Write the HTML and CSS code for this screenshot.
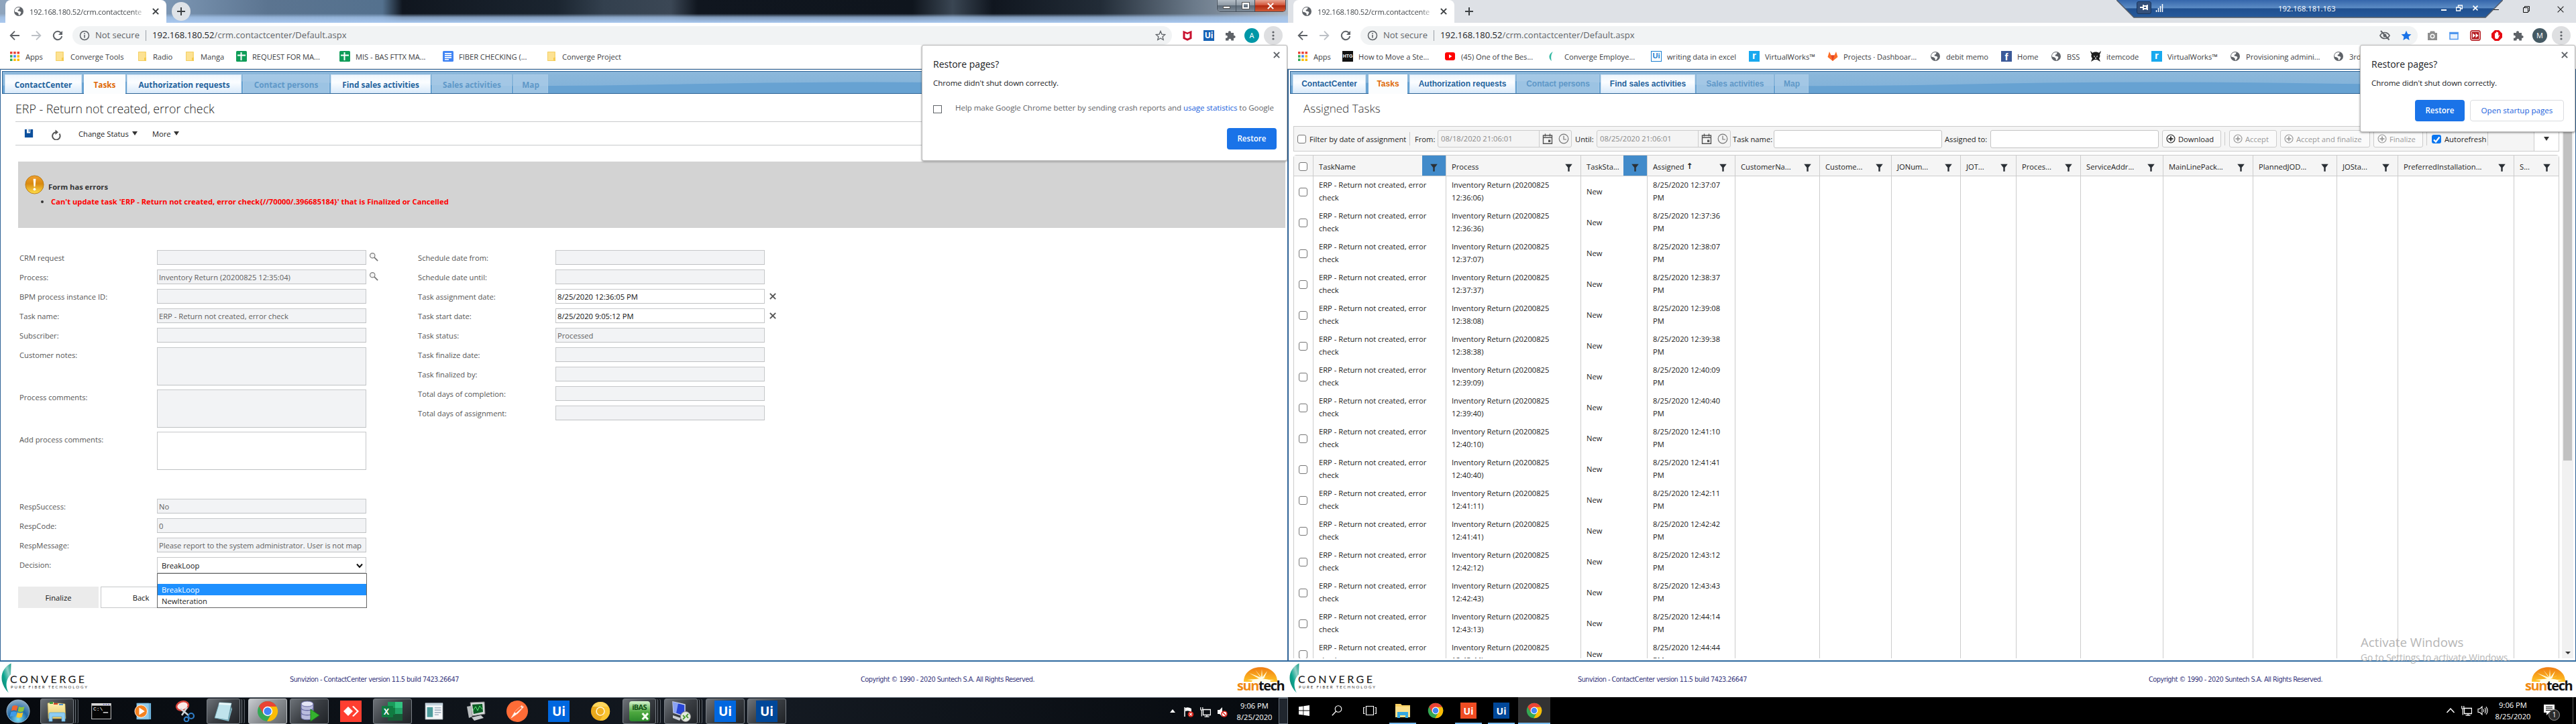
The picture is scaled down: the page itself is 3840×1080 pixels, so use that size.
FILE: index.html
```html
<!DOCTYPE html>
<html lang="en">
<head>
<meta charset="utf-8">
<title>ContactCenter</title>
<link rel="stylesheet" href="styles.css">
</head>
<body>
<svg class="sprite" width="0" height="0" aria-hidden="true">
  <defs>
    <linearGradient id="g-gold" x1="0" y1="0" x2="0" y2="1"><stop offset="0" stop-color="#f0a030"/><stop offset=".45" stop-color="#d98a10"/><stop offset="1" stop-color="#ffe04a"/></linearGradient>
    <linearGradient id="g-swoosh" x1="1" y1="0" x2="0" y2="1"><stop offset="0" stop-color="#0f9a84"/><stop offset=".3" stop-color="#8fd0c6"/><stop offset=".6" stop-color="#0aa58e"/><stop offset="1" stop-color="#1d7a6e"/></linearGradient>
    <linearGradient id="g-sun" x1="0" y1="0" x2="0" y2="1"><stop offset="0" stop-color="#f07c12"/><stop offset="1" stop-color="#ffc425"/></linearGradient>
    <radialGradient id="g-orb" cx=".5" cy=".85" r=".9"><stop offset="0" stop-color="#7fe0f4"/><stop offset=".45" stop-color="#1f6aa8"/><stop offset="1" stop-color="#9fb6c8"/></radialGradient>
    <linearGradient id="g-folder" x1="0" y1="0" x2="0" y2="1"><stop offset="0" stop-color="#fdf3b8"/><stop offset="1" stop-color="#e6c763"/></linearGradient>
  </defs>
  <symbol id="globe" viewBox="0 0 16 16"><circle cx="8" cy="8" r="7" fill="#5f6368"/><path d="M6 2.200 9.500 2 9 4.500 6.500 6 7 7.500 10 8l1.500 1.500-1.500 3-2 1.800-.5-3.300-2-1.500L2 8.500a6 6 0 0 1 4-6.300z" fill="#fff"/></symbol>
  <symbol id="back" viewBox="0 0 16 16"><path d="M15 8H2M8 1.700 1.700 8 8 14.300" fill="none" stroke="currentColor" stroke-width="1.900"/></symbol>
  <symbol id="fwd" viewBox="0 0 16 16"><path d="M1 8h13M8 1.700 14.300 8 8 14.300" fill="none" stroke="currentColor" stroke-width="1.900"/></symbol>
  <symbol id="reload" viewBox="0 0 16 16"><path d="M13 4.300A6.200 6.200 0 1 0 14.200 8.800" fill="none" stroke="currentColor" stroke-width="2"/><path d="M15 1v6H9z" fill="currentColor"/></symbol>
  <symbol id="info" viewBox="0 0 16 16"><circle cx="8" cy="8" r="6.500" fill="none" stroke="#5f6368" stroke-width="1.500"/><path d="M7.200 7h1.600v4.500H7.200zM7.200 4.300h1.600V6H7.200z" fill="#5f6368"/></symbol>
  <symbol id="apps" viewBox="0 0 16 16"><path d="M1 1h3.500v3.500H1zM6.200 1h3.500v3.500H6.200zM11.500 1H15v3.500h-3.500z" fill="#ea4335"/><path d="M1 6.200h3.500v3.500H1z" fill="#34a853"/><path d="M6.200 6.200h3.500v3.500H6.200z" fill="#4285f4"/><path d="M11.500 6.200H15v3.500h-3.500zM6.200 11.500h3.500V15H6.200zM11.500 11.500H15V15h-3.500z" fill="#fbbc05"/><path d="M1 11.500h3.500V15H1z" fill="#34a853"/></symbol>
  <symbol id="folder" viewBox="0 0 16 16"><path d="M2 1h12v14H2z" fill="#fde293"/><path d="M13 10h-2v5h3V9z" fill="#f6c944"/><path d="M2.500 1.500h10.500v13H2.500z" fill="none" stroke="#f3cf62" stroke-width="1"/></symbol>
  <symbol id="sheet" viewBox="0 0 16 16"><rect width="16" height="16" rx="1.500" fill="#0f9d58"/><path d="M6.500 2h2v12h-2zM2 5.500h12v2H2z" fill="#fff"/></symbol>
  <symbol id="doc" viewBox="0 0 16 16"><rect width="16" height="16" rx="1.500" fill="#4285f4"/><path d="M3 3h10v1.700H3zM3 6h10v1.700H3zM3 9h10v1.700H3zM3 12h6v1.500H3z" fill="#fff"/></symbol>
  <symbol id="yt" viewBox="0 0 16 16"><rect x="0" y="2" width="15" height="12" rx="3" fill="#f00"/><path d="M6 5.300 10.500 8 6 10.700z" fill="#fff"/></symbol>
  <symbol id="cmark" viewBox="0 0 16 16"><path d="M7 1C0 5 0 11 5 15 3.500 10 4 5 7 1z" fill="#33b8a2"/></symbol>
  <symbol id="gitlab" viewBox="0 0 16 16"><path d="M8 15 .5 9 3 1l2.500 5.500h5L13 1l2.500 8z" fill="#fc6d26"/><path d="m8 15-2.500-8.500h5z" fill="#e24329"/></symbol>
  <symbol id="skull" viewBox="0 0 16 16"><path d="M0 0c2 1 3 3 3 3 2-2 8-2 10 0 0 0 1-2 3-3-1 3-1 4-2 5 1 3 0 5-1 6l2 5-5-3H6l-5 3 2-5C1 9 1 7 2 5 1 4 1 3 0 0z" fill="#1d1d1d"/><path d="M5 7l2 1-1 1.500zM11 7 9 8l1 1.500zM7 10h2v1.500H7z" fill="#fff"/></symbol>
  <symbol id="star" viewBox="0 0 16 16"><path d="m8 1.500 1.900 4.600 4.900.4-3.700 3.200 1.100 4.800L8 12l-4.200 2.500 1.100-4.800L1.200 6.500l4.900-.4z" fill="none" stroke="#5f6368" stroke-width="1.300"/></symbol>
  <symbol id="starf" viewBox="0 0 16 16"><path d="m8 .8 2.200 5 5.300.5-4 3.500 1.200 5.200L8 12.200 3.300 15l1.200-5.200-4-3.500 5.300-.5z" fill="#1a73e8"/></symbol>
  <symbol id="mcafee" viewBox="0 0 16 16"><path d="M1.500.8 8 3.500 14.500.8v12L8 15.700l-6.500-2.900zM4.500 4.500v6.500L8 12.500l3.500-1.500V4.500L8 6.300z" fill="#c8102e" fill-rule="evenodd"/></symbol>
  <symbol id="puzzle" viewBox="0 0 16 16"><path d="M1 4h4.200a2 2 0 1 1 3.600 0H13v4a2 2 0 1 1 0 3.800V15.500H9.200a2 2 0 1 0-3.700 0H1v-4a2 2 0 1 0 0-3.600z" fill="#5f6368"/></symbol>
  <symbol id="dots" viewBox="0 0 16 16"><circle cx="8" cy="3" r="1.600" fill="#5f6368"/><circle cx="8" cy="8" r="1.600" fill="#5f6368"/><circle cx="8" cy="13" r="1.600" fill="#5f6368"/></symbol>
  <symbol id="eyeoff" viewBox="0 0 16 16"><path d="M1 8c3-6 11-6 14 0-3 6-11 6-14 0z" fill="none" stroke="#5f6368" stroke-width="1.700"/><circle cx="8" cy="8" r="2.500" fill="#5f6368"/><path d="m2 1 12.500 13.500" stroke="#5f6368" stroke-width="2"/></symbol>
  <symbol id="camera" viewBox="0 0 16 16"><path d="M5 1.500h6L12 4h3v11H1V4h3z" fill="#8f8f8f"/><circle cx="8" cy="9" r="3.500" fill="#fff"/><circle cx="8" cy="9" r="2" fill="#8f8f8f"/></symbol>
  <symbol id="pane" viewBox="0 0 16 16"><path d="M2 3.500h12v10H2z" fill="#e8f1fd" stroke="#4f96ee" stroke-width="1.500"/><path d="M1.500 3h13v3h-13z" fill="#4f96ee"/></symbol>
  <symbol id="ffwd" viewBox="0 0 16 16"><rect x=".7" y=".7" width="14.600" height="14.600" rx="3" fill="#fff" stroke="#b5191f" stroke-width="1.400"/><rect x="2.500" y="2.500" width="11" height="11" fill="#b5191f"/><path d="m4 4.500 4 3.500-4 3.500zM8.500 4.500l4 3.500-4 3.500z" fill="#fff"/></symbol>
  <symbol id="hand" viewBox="0 0 16 16"><path d="M5 0h6l5 5v6l-5 5H5l-5-5V5z" fill="#e60b12"/><path d="M5 9V5l1-1 .8 1V3l1-.8.8.8.8-.3.8 1v5l1.100-1.700.8.600-2 4.400c-1 1.600-4.300 1.500-4.900-.5z" fill="#fff"/></symbol>
  <symbol id="x" viewBox="0 0 16 16"><path d="m2.500 2.500 11 11m0-11-11 11" fill="none" stroke="currentColor" stroke-width="2.600"/></symbol>
  <symbol id="xthin" viewBox="0 0 16 16"><path d="m3 3 10 10m0-10L3 13" fill="none" stroke="currentColor" stroke-width="1.300"/></symbol>
  <symbol id="plus" viewBox="0 0 16 16"><path d="M8 2v12M2 8h12" stroke="#3c4043" stroke-width="2"/></symbol>
  <symbol id="disk" viewBox="0 0 16 16"><path d="M1 1h14v14H1z" fill="#0b4f9c"/><path d="M4.500 1h6v6.500h-6z" fill="#fff"/><path d="M7.800 1h1.500v4.500H7.800z" fill="#0b4f9c"/></symbol>
  <symbol id="cycle" viewBox="0 0 16 16"><path d="M13.500 6.500A5.700 5.700 0 1 1 8 4.200" fill="none" stroke="#555" stroke-width="2"/><path d="M7.500.5 12 4.200 7.500 8z" fill="#555"/></symbol>
  <symbol id="lens" viewBox="0 0 16 16"><circle cx="6" cy="6" r="4.200" fill="#f4f4f4" stroke="#777" stroke-width="1.300"/><path d="m9 9 6 6" stroke="#777" stroke-width="2"/></symbol>
  <symbol id="funnel" viewBox="0 0 16 16"><path d="M1.500 1.500h13L9.500 8v7h-3V8z" fill="#2b3036"/></symbol>
  <symbol id="cal" viewBox="0 0 16 16"><path d="M1.500 3h13v12.300h-13zM1.500 6.300h13M4.500.5v4M11.500.5v4" fill="none" stroke="#555" stroke-width="1.400"/><path d="M9 9.500h3.300v3.500H9z" fill="#555"/></symbol>
  <symbol id="clock" viewBox="0 0 16 16"><circle cx="8" cy="8" r="6.800" fill="none" stroke="#777" stroke-width="1.200"/><path d="M8 3.500V9h4" fill="none" stroke="#777" stroke-width="1.200"/></symbol>
  <symbol id="addc" viewBox="0 0 16 16"><circle cx="8" cy="8" r="6.800" fill="none" stroke="currentColor" stroke-width="1.300"/><path d="M8 4v8M4 8h8" stroke="currentColor" stroke-width="2"/></symbol>
  <symbol id="chrome" viewBox="0 0 32 32"><circle cx="16" cy="16" r="15" fill="#34a853"/><path d="M16 16 3 8.500a15 15 0 0 1 26 0z" fill="#ea4335"/><path d="M3 8.500 9.500 20 16 16 16 9H3z" fill="#ea4335"/><path d="M16 9h13.300A15 15 0 0 1 15 31l7-12z" fill="#fbbc05"/><circle cx="16" cy="16" r="7.200" fill="#fff"/><circle cx="16" cy="16" r="5.700" fill="#4285f4"/></symbol>
  <symbol id="canary" viewBox="0 0 32 32"><circle cx="16" cy="16" r="15" fill="#e9a91c"/><path d="M3 8.500a15 15 0 0 1 26.300.5H16z" fill="#ffd75e"/><path d="M16 9h13.300A15 15 0 0 1 15 31l7-12z" fill="#fbc531"/><circle cx="16" cy="16" r="7.200" fill="#fff3cf"/><circle cx="16" cy="16" r="5.500" fill="#f0b020"/></symbol>
  <symbol id="orb" viewBox="0 0 36 36"><circle cx="18" cy="18" r="17" fill="url(#g-orb)" stroke="#9db8cc"/><path d="M9.500 10.500q4-2.300 8 0l-1.700 7q-4-2-8 0z" fill="#f0652f"/><path d="M19 11q4 2 8.500 0l-1.700 7q-4 2-8.300 0z" fill="#8cc63e"/><path d="M7.300 19.200q4-2 8 0l-1.700 7q-4-2-8 0z" fill="#3f9be8"/><path d="M17 19.700q4 2 8.300 0l-1.700 7q-4 2-8.300 0z" fill="#fcc72c"/></symbol>
  <symbol id="explorer7" viewBox="0 0 32 32"><path d="M2 4 10 2l2 2h8l8 1 1 22H3z" fill="url(#g-folder)" stroke="#b99c45" stroke-width=".6"/><path d="M5 2h5v3H5z" fill="#3a9b3a"/><path d="M11 4h6v2h-6z" fill="#d64022"/><path d="M19 5h6v2h-6z" fill="#4a90d0"/><path d="M4 31V20q0-2 2-2h20q2 0 2 2v11h-5v-7H9v7z" fill="#8fcdf2" stroke="#4f9fd0" stroke-width=".7"/></symbol>
  <symbol id="cmd" viewBox="0 0 32 26"><path d="M0 0h32v26H0z" fill="#d9d9d9"/><path d="M1 4h30v21H1z" fill="#060606"/><path d="M19 15h8" stroke="#eee" stroke-width="1.500"/><path d="M19 2h2m2 0h2m2 0h2" stroke="#55a" stroke-width="1.500"/></symbol>
  <symbol id="wmp" viewBox="0 0 28 28"><path d="M7 1h20v26H7z" fill="#6fb3dc"/><path d="M4 1h20v26H4z" fill="#8fcaea" stroke="#4887b0" stroke-width=".5"/><circle cx="11" cy="14" r="10" fill="#f58220" stroke="#fff"/><path d="m8 8 9 6-9 6z" fill="#fff"/></symbol>
  <symbol id="snip" viewBox="0 0 32 32"><ellipse cx="13" cy="8" rx="9" ry="6.500" fill="#fbe9e7" stroke="#d8423a" stroke-width="2.500" transform="rotate(-15 13 8)"/><path d="m10 12 12 10M20 10l-8 12" stroke="#cfd4d8" stroke-width="2.500"/><circle cx="26" cy="23" r="4" fill="none" stroke="#2f7cc4" stroke-width="2.200"/><circle cx="19" cy="28" r="3.300" fill="none" stroke="#2f7cc4" stroke-width="2.200"/></symbol>
  <symbol id="notepad" viewBox="0 0 32 32"><path d="m10 3 18 1-5 25-20-3z" fill="#bfe3ec" stroke="#6aa2b0" stroke-width=".8"/><path d="m10 3 18 1-1 3-18-1z" fill="#e8f6f8"/><path d="m3 26 20 3 5-20 1 4-5 18z" fill="#7fb6c4"/></symbol>
  <symbol id="db" viewBox="0 0 32 32"><path d="M4 5v20c0 5 18 5 18 0V5z" fill="#b9bbdd" stroke="#6b6da5"/><ellipse cx="13" cy="5" rx="9" ry="4" fill="#e6e7f7" stroke="#6b6da5"/><path d="M4 11c0 5 18 5 18 0M4 18c0 5 18 5 18 0" fill="none" stroke="#6b6da5" stroke-width="1.300"/><path d="m18 13 13 9-13 9z" fill="#35b22e" stroke="#1c7a1c"/></symbol>
  <symbol id="anydesk" viewBox="0 0 32 32"><path d="M0 0h32v32H0z" fill="#ff3e30"/><path d="m12 9 7 7-7 7-7-7z" fill="#fff"/><path d="m18 9 2-1 8 8-8 8-2-1 7-7z" fill="#fff"/></symbol>
  <symbol id="excel" viewBox="0 0 32 32"><path d="M9 2h22v28H9z" fill="#21a366"/><path d="M9 2h11v9H9z" fill="#1a9c5b"/><path d="M20 2h11v9H20z" fill="#33c481"/><path d="M9 20h22v10H9z" fill="#185c37"/><path d="M9 11h11v10H9z" fill="#107c41"/><rect x="0" y="8" width="17" height="17" rx="1" fill="#107c41"/></symbol>
  <symbol id="appwin" viewBox="0 0 32 30"><path d="M1 1h30v28H1z" fill="#f4f6f8" stroke="#8a949c"/><path d="M1 1h30v4H1z" fill="#c4d3de"/><path d="M4 8h10v17H4z" fill="#4d9c9c"/><path d="M17 9h11M17 13h11M17 17h11M17 21h7" stroke="#9ab" stroke-width="1.500"/></symbol>
  <symbol id="perf" viewBox="0 0 32 32"><path d="m8 3 21-1 1 18-19 3z" fill="#d8dadb" stroke="#777"/><path d="m11 6 15-1 1 12-14 3z" fill="#0c5c24"/><path d="m12 15 4-6 3 6 3-7 4 5" fill="none" stroke="#5bf077"/><path d="M3 9l6-1 2 16-5 2z" fill="#b8bcbe"/><path d="m10 25 14-3 4 4-14 4z" fill="#c8cbcd"/></symbol>
  <symbol id="postman" viewBox="0 0 32 32"><circle cx="16" cy="16" r="16" fill="#ff6c37"/><path d="m7 26 6-10 9-8 3 2-8 9zM22 7l4 3" fill="#fff" stroke="#ffd3c2"/><path d="m12 17 9-8 2 2-9 8z" fill="#ff6c37"/></symbol>
  <symbol id="rdp" viewBox="0 0 32 32"><path d="m4 2 18 4v18L5 18z" fill="#2846d6" stroke="#ccd3e8" stroke-width="1.500"/><path d="m4 2 8 2-3 15-4-1z" fill="#8aa2f2"/><path d="m4 22 12 4-2 4-10-4z" fill="#c9ced4"/><circle cx="23" cy="24" r="7.500" fill="#e4e9e0" stroke="#888"/><path d="m19 22 3 3-3 3M27 20l-3 3 3 3" fill="none" stroke="#4a9b2e" stroke-width="1.800"/></symbol>
  <symbol id="win10" viewBox="0 0 16 16"><path d="m0 2.300 6.500-.9v6.200H0zM7.300 1.300 16 0v7.600H7.300zM0 8.400h6.500v6.200L0 13.700zM7.300 8.400H16V16l-8.700-1.300z" fill="#fff"/></symbol>
  <symbol id="find10" viewBox="0 0 16 16"><circle cx="10" cy="5.500" r="4.800" fill="none" stroke="#fff" stroke-width="1.100"/><path d="M6.700 9 .8 15.200" stroke="#fff" stroke-width="1.300"/></symbol>
  <symbol id="tv10" viewBox="0 0 20 16"><path d="M4.500 1.500h11v13h-11zM2.500 3.500H.7v9h1.800M17.500 3.500h1.800v9h-1.800" fill="none" stroke="#fff" stroke-width="1.200"/></symbol>
  <symbol id="explorer10" viewBox="0 0 24 24"><path d="M1 2h8l2 2h12v18H1z" fill="#f9cf60"/><path d="M1 6h22v16H1z" fill="#fde08a"/><path d="M4 23v-9h16v9h-4v-4H8v4z" fill="#35a8e0"/></symbol>
  <symbol id="flag" viewBox="0 0 16 16"><path d="M2 1v14" stroke="#fff" stroke-width="1.500"/><path d="M3 2q4-2 9 1v5q-5-3-9-1z" fill="#fff"/><circle cx="11" cy="11.500" r="4.300" fill="#d8251d"/><path d="m9.200 9.700 3.600 3.600m0-3.600-3.600 3.600" stroke="#fff" stroke-width="1.200"/></symbol>
  <symbol id="net" viewBox="0 0 16 16"><path d="M4.500 4.500h11v8h-11zM10 12.500V15M6.500 15.200h7" fill="none" stroke="#fff" stroke-width="1.300"/><path d="M.8 1v4h3V1M2.300 5v9.500" fill="none" stroke="#fff" stroke-width="1.200"/></symbol>
  <symbol id="mute" viewBox="0 0 16 16"><path d="M1 5h3l4-4v14l-4-4H1z" fill="#fff"/><circle cx="11" cy="11" r="4" fill="#fff" stroke="#d8251d" stroke-width="1.600"/><path d="m8.300 8.300 5.400 5.400" stroke="#d8251d" stroke-width="1.600"/></symbol>
  <symbol id="vol" viewBox="0 0 16 16"><path d="M1 5.500h2.500L7 2v12l-3.500-3.500H1zM9 6q1.500 2 0 4M11 4q3 4 0 8M13 2.300q4.200 5.700 0 11.400" fill="none" stroke="#fff" stroke-width="1.100"/></symbol>
  <symbol id="caret" viewBox="0 0 16 16"><path d="m2.500 11 5.500-6 5.500 6" fill="none" stroke="#fff" stroke-width="1.500"/></symbol>
  <symbol id="converge" viewBox="0 0 16 47"><path d="M15.500 0C-1 8-6 29 11.500 47 6 36 7 26 15 17.500z" fill="url(#g-swoosh)"/></symbol>
  <symbol id="sun" viewBox="0 0 50 22"><path d="M0 22C0-7 50-7 50 22z" fill="url(#g-sun)"/><path d="M25 22 5 19l18-1.500L8 9l17 6.500L17 4l9 11 1-12 1 12 7-9-4.500 10.500L43 10 28 18l18 1.500z" fill="#fffbe0"/><ellipse cx="26" cy="22" rx="14" ry="4.500" fill="#fffce8"/></symbol>
</svg>

<div class="desktop">
<!-- First monitor -->
<section class="monitor">
  <div class="tabstrip aero">
    <div class="btab"><svg class="i16"><use href="#globe"/></svg><span class="btab-t">192.168.180.52/crm.contactcente</span><svg class="i12"><use href="#x"/></svg></div>
    <span class="newtab round"><svg class="i16"><use href="#plus"/></svg></span>
    <div class="aerobtns"><span class="ab"><i class="ab-min"></i></span><span class="ab"><i class="ab-max"></i></span><span class="ab close"><svg class="i12"><use href="#x"/></svg></span></div>
  </div>
  <div class="toolbar">
    <svg class="i16 nav"><use href="#back"/></svg><svg class="i16 nav dim"><use href="#fwd"/></svg><svg class="i16 nav"><use href="#reload"/></svg>
    <div class="omni omni-l"><svg class="i16"><use href="#info"/></svg><span class="ns">Not secure</span><i class="bar"></i><span class="url"><b>192.168.180.52</b>/crm.contactcenter/Default.aspx</span><svg class="i16 end"><use href="#star"/></svg></div>
    <div class="exts"><svg class="i16"><use href="#mcafee"/></svg><span class="uib">Ui</span><svg class="i16"><use href="#puzzle"/></svg><span class="ava teal">A</span><span class="kebab"><svg class="i16"><use href="#dots"/></svg></span></div>
  </div>
  <div class="bookmarks bm-l">
    <span class="bm"><svg class="i16"><use href="#apps"/></svg><span>Apps</span></span>
    <span class="bm"><svg class="i16"><use href="#folder"/></svg><span>Converge Tools</span></span>
    <span class="bm"><svg class="i16"><use href="#folder"/></svg><span>Radio</span></span>
    <span class="bm"><svg class="i16"><use href="#folder"/></svg><span>Manga</span></span>
    <span class="bm"><svg class="i16"><use href="#sheet"/></svg><span>REQUEST FOR MA...</span></span>
    <span class="bm"><svg class="i16"><use href="#sheet"/></svg><span>MIS - BAS FTTX MA...</span></span>
    <span class="bm"><svg class="i16"><use href="#doc"/></svg><span>FIBER CHECKING (...</span></span>
    <span class="bm"><svg class="i16"><use href="#folder"/></svg><span>Converge Project</span></span>
  </div>
  <div class="page">
    <nav class="apptabs at-l">
      <a>ContactCenter</a><a class="on">Tasks</a><a>Authorization requests</a><a class="off">Contact persons</a><a>Find sales activities</a><a class="off">Sales activities</a><a class="off">Map</a>
      <svg class="wave" viewBox="0 0 1914 34" preserveAspectRatio="none"><path d="M0 22Q250 10 500 18T1000 20T1500 18T1914 18V34H0z" fill="#67a2d2"/></svg>
    </nav>
    <h1 class="title dark">ERP - Return not created, error check</h1>
    <div class="actions"><svg class="i14"><use href="#disk"/></svg><svg class="i16 cyc"><use href="#cycle"/></svg><span class="act a1">Change Status</span><i class="tri"></i><span class="act a2">More</span><i class="tri"></i></div>
    <div class="alert">
      <svg class="warn" viewBox="0 0 30 30"><circle cx="15" cy="15" r="14" fill="url(#g-gold)" stroke="#b87a14"/><path d="M13 6h4l-1 12h-2z" fill="#fff"/><circle cx="15" cy="22" r="2" fill="#fff"/></svg>
      <div class="alert-b"><p>Form has errors</p><ul><li><span>Can't update task 'ERP - Return not created, error check{//70000/.396685184}' that is Finalized or Cancelled</span></li></ul></div>
    </div>
    <div class="form">
      <div class="col col1">
        <label>CRM request</label><div class="f ro"></div><svg class="i14 lens"><use href="#lens"/></svg>
        <label>Process:</label><div class="f ro">Inventory Return (20200825 12:35:04)</div><svg class="i14 lens"><use href="#lens"/></svg>
        <label>BPM process instance ID:</label><div class="f ro"></div><i></i>
        <label>Task name:</label><div class="f ro">ERP - Return not created, error check</div><i></i>
        <label>Subscriber:</label><div class="f ro"></div><i></i>
        <label>Customer notes:</label><div class="f ro ta"></div><i></i>
        <label>Process comments:</label><div class="f ro ta"></div><i></i>
        <label>Add process comments:</label><div class="f ta"></div><i></i>
        <label>RespSuccess:</label><div class="f ro">No</div><i></i>
        <label>RespCode:</label><div class="f ro">0</div><i></i>
        <label>RespMessage:</label><div class="f ro msg">Please report to the system administrator. User is not map</div><i></i>
        <label>Decision:</label>
        <div class="selwrap"><div class="sel">BreakLoop<svg class="chev" viewBox="0 0 10 8"><path d="m1 1.500 4 4.500 4-4.500" fill="none" stroke="#111" stroke-width="2"/></svg></div>
          <div class="menu"><div class="op blank"></div><div class="op hi">BreakLoop</div><div class="op">NewIteration</div></div></div><i></i>
      </div>
      <div class="col col2">
        <label>Schedule date from:</label><div class="f ro"></div><i></i>
        <label>Schedule date until:</label><div class="f ro"></div><i></i>
        <label>Task assignment date:</label><div class="f">8/25/2020 12:36:05 PM</div><svg class="i12 clr"><use href="#x"/></svg>
        <label>Task start date:</label><div class="f">8/25/2020 9:05:12 PM</div><svg class="i12 clr"><use href="#x"/></svg>
        <label>Task status:</label><div class="f ro">Processed</div><i></i>
        <label>Task finalize date:</label><div class="f ro"></div><i></i>
        <label>Task finalized by:</label><div class="f ro"></div><i></i>
        <label>Total days of completion:</label><div class="f ro"></div><i></i>
        <label>Total days of assignment:</label><div class="f ro"></div><i></i>
      </div>
    </div>
    <div class="btns"><span class="btn gray">Finalize</span><span class="btn">Back</span></div>
  </div>
  <footer class="foot"><div class="clogo"><svg class="sw"><use href="#converge"/></svg><div><b>CONVERGE</b><small>PURE FIBER TECHNOLOGY</small></div></div><span class="ver">Sunvizion - ContactCenter version 11.5 build 7423.26647</span><span class="copy">Copyright © 1990 - 2020 Suntech S.A. All Rights Reserved.</span><div class="slogo"><svg class="sunsvg"><use href="#sun"/></svg><b><em>sun</em>tech</b></div></footer>
  <div class="task7">
    <svg class="orb"><use href="#orb"/></svg>
    <div class="slots">
      <span class="s run stack"><svg class="t32"><use href="#explorer7"/></svg></span>
      <span class="s cmd"><svg class="tcmd"><use href="#cmd"/></svg><small>C:\</small></span>
      <span class="s"><svg class="t28"><use href="#wmp"/></svg></span>
      <span class="s"><svg class="t32"><use href="#snip"/></svg></span>
      <span class="s run stack"><svg class="t32"><use href="#notepad"/></svg></span>
      <span class="s run lit"><svg class="t32"><use href="#chrome"/></svg></span>
      <span class="s run"><svg class="t32"><use href="#db"/></svg></span>
      <span class="s"><svg class="t32"><use href="#anydesk"/></svg></span>
      <span class="s run xl"><svg class="t32"><use href="#excel"/></svg><small>X</small></span>
      <span class="s"><svg class="t28"><use href="#appwin"/></svg></span>
      <span class="s"><svg class="t32"><use href="#perf"/></svg></span>
      <span class="s"><svg class="t32"><use href="#postman"/></svg></span>
      <span class="s"><b class="ui u1">Ui</b></span>
      <span class="s"><svg class="t30"><use href="#canary"/></svg></span>
      <span class="s run stack"><b class="ibas">iBAS<svg viewBox="0 0 30 12"><path d="m19 1 8 9m0-9-8 9" stroke="#f4fff0" stroke-width="3"/></svg></b></span>
      <span class="s run stack"><svg class="t32"><use href="#rdp"/></svg></span>
      <span class="s run"><b class="ui u1">Ui</b></span>
      <span class="s run"><b class="ui u2">Ui</b></span>
    </div>
    <div class="tray7"><i class="up"></i><svg class="i16"><use href="#flag"/></svg><svg class="i16"><use href="#net"/></svg><svg class="i16"><use href="#mute"/></svg><div class="time">9:06 PM<br>8/25/2020</div><i class="peek"></i></div>
  </div>
  <aside class="pop pop-l">
    <svg class="i12 px"><use href="#x"/></svg>
    <h2>Restore pages?</h2><p>Chrome didn't shut down correctly.</p>
    <div class="help"><i class="cbx"></i><span>Help make Google Chrome better by sending crash reports and <a>usage statistics</a> to Google</span></div>
    <div class="pb"><span class="blue">Restore</span></div>
  </aside>
</section>

<!-- Second monitor, remote session -->
<section class="monitor">
  <div class="tabstrip flat">
    <div class="btab"><svg class="i16"><use href="#globe"/></svg><span class="btab-t">192.168.180.52/crm.contactcente</span><svg class="i12"><use href="#x"/></svg></div>
    <span class="newtab"><svg class="i16"><use href="#plus"/></svg></span>
    <div class="winbtns"><i class="wmin"></i><svg class="wmax" viewBox="0 0 10 10"><path d="M.5 2.500h7v7h-7zM2.500 2.500v-2h7v7h-2" fill="none" stroke="#111"/></svg><svg class="i14"><use href="#xthin"/></svg></div>
  </div>
  <div class="toolbar">
    <svg class="i16 nav"><use href="#back"/></svg><svg class="i16 nav dim"><use href="#fwd"/></svg><svg class="i16 nav"><use href="#reload"/></svg>
    <div class="omni omni-r"><svg class="i16"><use href="#info"/></svg><span class="ns">Not secure</span><i class="bar"></i><span class="url"><b>192.168.180.52</b>/crm.contactcenter/Default.aspx</span><svg class="i16 end"><use href="#eyeoff"/></svg><svg class="i16"><use href="#starf"/></svg></div>
    <div class="exts"><svg class="i16"><use href="#camera"/></svg><svg class="i16"><use href="#pane"/></svg><svg class="i16"><use href="#ffwd"/></svg><svg class="i16"><use href="#hand"/></svg><svg class="i16"><use href="#puzzle"/></svg><span class="ava slate">M</span><span class="kebab"><svg class="i16"><use href="#dots"/></svg></span></div>
  </div>
  <div class="bookmarks bm-r">
    <span class="bm"><svg class="i16"><use href="#apps"/></svg><span>Apps</span></span>
    <span class="bm"><b class="fav htg">HTG</b><span>How to Move a Ste...</span></span>
    <span class="bm"><svg class="i16"><use href="#yt"/></svg><span>(45) One of the Bes...</span></span>
    <span class="bm"><svg class="i16"><use href="#cmark"/></svg><span>Converge Employe...</span></span>
    <span class="bm"><b class="fav uil">Ui</b><span>writing data in excel</span></span>
    <span class="bm"><b class="fav rr">r</b><span>VirtualWorks™</span></span>
    <span class="bm"><svg class="i16"><use href="#gitlab"/></svg><span>Projects · Dashboar...</span></span>
    <span class="bm"><svg class="i16"><use href="#globe"/></svg><span>debit memo</span></span>
    <span class="bm"><b class="fav fb">f</b><span>Home</span></span>
    <span class="bm"><svg class="i16"><use href="#globe"/></svg><span>BSS</span></span>
    <span class="bm"><svg class="i16"><use href="#skull"/></svg><span>itemcode</span></span>
    <span class="bm"><b class="fav rr">r</b><span>VirtualWorks™</span></span>
    <span class="bm"><svg class="i16"><use href="#globe"/></svg><span>Provisioning admini...</span></span>
    <span class="bm"><svg class="i16"><use href="#globe"/></svg><span>3rd</span></span>
  </div>
  <div class="page">
    <nav class="apptabs at-r">
      <a>ContactCenter</a><a class="on">Tasks</a><a>Authorization requests</a><a class="off">Contact persons</a><a>Find sales activities</a><a class="off">Sales activities</a><a class="off">Map</a>
      <svg class="wave" viewBox="0 0 1914 34" preserveAspectRatio="none"><path d="M0 22Q250 10 500 18T1000 20T1500 18T1914 20V34H0z" fill="#67a2d2"/></svg>
    </nav>
    <div class="split">
      <div class="main">
        <h1 class="title">Assigned Tasks</h1>
        <div class="filter">
          <i class="cb"></i><span class="t w-filter">Filter by date of assignment</span><i class="vb"></i>
          <span class="t w-from">From:</span><div class="dt"><span>08/18/2020 21:06:01</span><svg class="i16"><use href="#cal"/></svg><svg class="i16"><use href="#clock"/></svg></div>
          <span class="t w-until">Until:</span><div class="dt"><span>08/25/2020 21:06:01</span><svg class="i16"><use href="#cal"/></svg><svg class="i16"><use href="#clock"/></svg></div>
          <span class="t w-task">Task name:</span><div class="inp"></div>
          <span class="t w-asg">Assigned to:</span><div class="inp"></div>
          <span class="gb b1"><svg class="i14"><use href="#addc"/></svg>Download</span><i class="vb v2"></i>
          <span class="gb b2 dis"><svg class="i14"><use href="#addc"/></svg>Accept</span><span class="gb b3 dis"><svg class="i14"><use href="#addc"/></svg>Accept and finalize</span><span class="gb b4 dis"><svg class="i14"><use href="#addc"/></svg>Finalize</span><i class="vb v3"></i>
          <i class="cb on"><svg viewBox="0 0 14 14"><path d="m3 7.500 3 3 5.500-7" fill="none" stroke="#fff" stroke-width="2.200"/></svg></i><span class="t w-auto">Autorefresh</span><i class="vb"></i>
          <div class="more"><i class="tri"></i></div>
        </div>
        <div class="grid">
          <div class="row head">
            <span><i class="cb"></i></span>
            <span>TaskName<em class="hl"><svg class="i14"><use href="#funnel"/></svg></em></span>
            <span>Process<em><svg class="i14"><use href="#funnel"/></svg></em></span>
            <span>TaskSta...<em class="hl"><svg class="i14"><use href="#funnel"/></svg></em></span>
            <span>Assigned&nbsp;<b class="asc">↑</b><em><svg class="i14"><use href="#funnel"/></svg></em></span>
            <span>CustomerNa...<em><svg class="i14"><use href="#funnel"/></svg></em></span>
            <span>Custome...<em><svg class="i14"><use href="#funnel"/></svg></em></span>
            <span>JONum...<em><svg class="i14"><use href="#funnel"/></svg></em></span>
            <span>JOT...<em><svg class="i14"><use href="#funnel"/></svg></em></span>
            <span>Proces...<em><svg class="i14"><use href="#funnel"/></svg></em></span>
            <span>ServiceAddr...<em><svg class="i14"><use href="#funnel"/></svg></em></span>
            <span>MainLinePack...<em><svg class="i14"><use href="#funnel"/></svg></em></span>
            <span>PlannedJOD...<em><svg class="i14"><use href="#funnel"/></svg></em></span>
            <span>JOSta...<em><svg class="i14"><use href="#funnel"/></svg></em></span>
            <span>PreferredInstallation...<em><svg class="i14"><use href="#funnel"/></svg></em></span>
            <span>S...<em><svg class="i14"><use href="#funnel"/></svg></em></span>
          </div>
          <div class="row"><span><i class="cb"></i></span><span>ERP - Return not created, error<br>check</span><span>Inventory Return (20200825<br>12:36:06)</span><span>New</span><span>8/25/2020 12:37:07<br>PM</span><span></span><span></span><span></span><span></span><span></span><span></span><span></span><span></span><span></span><span></span><span></span></div>
          <div class="row"><span><i class="cb"></i></span><span>ERP - Return not created, error<br>check</span><span>Inventory Return (20200825<br>12:36:36)</span><span>New</span><span>8/25/2020 12:37:36<br>PM</span><span></span><span></span><span></span><span></span><span></span><span></span><span></span><span></span><span></span><span></span><span></span></div>
          <div class="row"><span><i class="cb"></i></span><span>ERP - Return not created, error<br>check</span><span>Inventory Return (20200825<br>12:37:07)</span><span>New</span><span>8/25/2020 12:38:07<br>PM</span><span></span><span></span><span></span><span></span><span></span><span></span><span></span><span></span><span></span><span></span><span></span></div>
          <div class="row"><span><i class="cb"></i></span><span>ERP - Return not created, error<br>check</span><span>Inventory Return (20200825<br>12:37:37)</span><span>New</span><span>8/25/2020 12:38:37<br>PM</span><span></span><span></span><span></span><span></span><span></span><span></span><span></span><span></span><span></span><span></span><span></span></div>
          <div class="row"><span><i class="cb"></i></span><span>ERP - Return not created, error<br>check</span><span>Inventory Return (20200825<br>12:38:08)</span><span>New</span><span>8/25/2020 12:39:08<br>PM</span><span></span><span></span><span></span><span></span><span></span><span></span><span></span><span></span><span></span><span></span><span></span></div>
          <div class="row"><span><i class="cb"></i></span><span>ERP - Return not created, error<br>check</span><span>Inventory Return (20200825<br>12:38:38)</span><span>New</span><span>8/25/2020 12:39:38<br>PM</span><span></span><span></span><span></span><span></span><span></span><span></span><span></span><span></span><span></span><span></span><span></span></div>
          <div class="row"><span><i class="cb"></i></span><span>ERP - Return not created, error<br>check</span><span>Inventory Return (20200825<br>12:39:09)</span><span>New</span><span>8/25/2020 12:40:09<br>PM</span><span></span><span></span><span></span><span></span><span></span><span></span><span></span><span></span><span></span><span></span><span></span></div>
          <div class="row"><span><i class="cb"></i></span><span>ERP - Return not created, error<br>check</span><span>Inventory Return (20200825<br>12:39:40)</span><span>New</span><span>8/25/2020 12:40:40<br>PM</span><span></span><span></span><span></span><span></span><span></span><span></span><span></span><span></span><span></span><span></span><span></span></div>
          <div class="row"><span><i class="cb"></i></span><span>ERP - Return not created, error<br>check</span><span>Inventory Return (20200825<br>12:40:10)</span><span>New</span><span>8/25/2020 12:41:10<br>PM</span><span></span><span></span><span></span><span></span><span></span><span></span><span></span><span></span><span></span><span></span><span></span></div>
          <div class="row"><span><i class="cb"></i></span><span>ERP - Return not created, error<br>check</span><span>Inventory Return (20200825<br>12:40:40)</span><span>New</span><span>8/25/2020 12:41:41<br>PM</span><span></span><span></span><span></span><span></span><span></span><span></span><span></span><span></span><span></span><span></span><span></span></div>
          <div class="row"><span><i class="cb"></i></span><span>ERP - Return not created, error<br>check</span><span>Inventory Return (20200825<br>12:41:11)</span><span>New</span><span>8/25/2020 12:42:11<br>PM</span><span></span><span></span><span></span><span></span><span></span><span></span><span></span><span></span><span></span><span></span><span></span></div>
          <div class="row"><span><i class="cb"></i></span><span>ERP - Return not created, error<br>check</span><span>Inventory Return (20200825<br>12:41:41)</span><span>New</span><span>8/25/2020 12:42:42<br>PM</span><span></span><span></span><span></span><span></span><span></span><span></span><span></span><span></span><span></span><span></span><span></span></div>
          <div class="row"><span><i class="cb"></i></span><span>ERP - Return not created, error<br>check</span><span>Inventory Return (20200825<br>12:42:12)</span><span>New</span><span>8/25/2020 12:43:12<br>PM</span><span></span><span></span><span></span><span></span><span></span><span></span><span></span><span></span><span></span><span></span><span></span></div>
          <div class="row"><span><i class="cb"></i></span><span>ERP - Return not created, error<br>check</span><span>Inventory Return (20200825<br>12:42:43)</span><span>New</span><span>8/25/2020 12:43:43<br>PM</span><span></span><span></span><span></span><span></span><span></span><span></span><span></span><span></span><span></span><span></span><span></span></div>
          <div class="row"><span><i class="cb"></i></span><span>ERP - Return not created, error<br>check</span><span>Inventory Return (20200825<br>12:43:13)</span><span>New</span><span>8/25/2020 12:44:14<br>PM</span><span></span><span></span><span></span><span></span><span></span><span></span><span></span><span></span><span></span><span></span><span></span></div>
          <div class="row"><span><i class="cb"></i></span><span>ERP - Return not created, error<br>check</span><span>Inventory Return (20200825<br>12:43:44)</span><span>New</span><span>8/25/2020 12:44:44<br>PM</span><span></span><span></span><span></span><span></span><span></span><span></span><span></span><span></span><span></span><span></span><span></span></div>
        </div>
      </div>
      <div class="scroll"><i class="thumb"></i><i class="tri"></i></div>
    </div>
  </div>
  <footer class="foot"><div class="clogo"><svg class="sw"><use href="#converge"/></svg><div><b>CONVERGE</b><small>PURE FIBER TECHNOLOGY</small></div></div><span class="ver">Sunvizion - ContactCenter version 11.5 build 7423.26647</span><span class="copy">Copyright © 1990 - 2020 Suntech S.A. All Rights Reserved.</span><div class="slogo"><svg class="sunsvg"><use href="#sun"/></svg><b><em>sun</em>tech</b></div></footer>
  <div class="task10">
    <div class="slots10">
      <span><svg class="i16"><use href="#win10"/></svg></span><span><svg class="i16"><use href="#find10"/></svg></span><span><svg class="tv"><use href="#tv10"/></svg></span>
      <span class="run"><svg class="t24"><use href="#explorer10"/></svg></span><span><svg class="t24"><use href="#chrome"/></svg></span><span class="run"><b class="ui sm u3">Ui</b></span><span class="run"><b class="ui sm u2">Ui</b></span><span class="cur"><svg class="t24"><use href="#chrome"/></svg></span>
    </div>
    <div class="tray10"><svg class="i16"><use href="#caret"/></svg><svg class="i16"><use href="#net"/></svg><svg class="i16"><use href="#vol"/></svg><div class="time">9:06 PM<br>8/25/2020</div>
      <div class="notif"><svg class="i16" viewBox="0 0 16 16"><path d="M0 0h16v12H8l-4 4v-4H0z" fill="#fff"/><path d="M3 3.500h10M3 6h10M3 8.500h10" stroke="#000"/></svg><b>1</b></div><i class="peek10"></i></div>
  </div>
  <div class="rdpbar">
    <svg class="rdpbg" viewBox="0 0 576 27"><defs><linearGradient id="g-rdp" x1="0" y1="0" x2="0" y2="1"><stop offset="0" stop-color="#3566ab"/><stop offset=".45" stop-color="#5b8bc4"/><stop offset=".5" stop-color="#1f4f8f"/><stop offset="1" stop-color="#275a9c"/></linearGradient></defs><path d="M0 0h576l-26 26H26z" fill="url(#g-rdp)"/><path d="m0 0 26 26h524l26-26" fill="none" stroke="#555c66" stroke-width="1.500"/></svg>
    <div class="rdprow"><span class="pin"><svg class="i14" viewBox="0 0 14 14"><path d="M1 7h5M6 3v8M6 5h5v4H6M12 3v8" fill="none" stroke="#fff" stroke-width="1.800"/></svg></span><svg class="i12" viewBox="0 0 12 12"><path d="M1.500 12V9M4.500 12V6M7.500 12V3M10.500 12V0" stroke="#fff" stroke-width="1.500"/></svg><span class="ip">192.168.181.163</span><i class="rmin"></i><svg class="i10" viewBox="0 0 10 10"><path d="M.5 4h6v5h-6zM3.500 4V1h6v5h-3" fill="none" stroke="#fff" stroke-width="1.400"/></svg><svg class="i10 rx"><use href="#x"/></svg></div>
  </div>
  <aside class="pop pop-r">
    <svg class="i12 px"><use href="#x"/></svg>
    <h2>Restore pages?</h2><p>Chrome didn't shut down correctly.</p>
    <div class="pb"><span class="blue">Restore</span><span class="line">Open startup pages</span></div>
  </aside>
  <div class="mark"><b>Activate Windows</b><span>Go to Settings to activate Windows.</span></div>
</section>
</div>
</body>
</html>
```
FILE: styles.css
```css
* { box-sizing: border-box; }
body { margin: 0; width: 3840px; height: 1080px; overflow: hidden; background: #fff; font: 11.2px/19px "Open Sans", "Noto Sans", sans-serif; color: #222; }
h1, h2, p, ul { margin: 0; padding: 0; }
h1, h2 { font-weight: 400; }
b, em, i { font-style: normal; }
svg { display: block; flex: none; }
span, label { white-space: nowrap; }
.sprite { position: absolute; }
.i10 { width: 10px; height: 10px; } .i12 { width: 12px; height: 12px; } .i14 { width: 14px; height: 14px; } .i16 { width: 16px; height: 16px; }
.desktop { display: flex; height: 1080px; }
.monitor { position: relative; width: 1920px; height: 1080px; display: flex; flex-direction: column; flex: none; overflow: hidden; }
.tri { border: 4px solid transparent; border-top: 6px solid #333; border-bottom: 0; }

/* Browser tab strip */
.tabstrip { height: 34px; display: flex; align-items: center; padding-left: 8px; flex: none; }
.aero { background: linear-gradient(180deg, transparent 60%, rgba(168,200,239,.75) 76%, #a9c8ef 100%), linear-gradient(90deg, #8fa5bd 0, #7c96b3 250px, #5b7490 400px, #54718e 570px, #10161f 600px, #1b2530 830px, #33404e 900px, #3b4755 1000px, #10161f 1040px, #0f151d 1360px, #3a4653 1420px, #10161f 1480px, #222c37 1640px, #6b7a8a 1780px, #a9b5c2 1920px); }
.flat { background: #dee1e6; }
.btab { width: 240px; height: 34px; background: #fff; border-radius: 8px 8px 0 0; display: flex; align-items: center; padding: 0 10px 0 12px; gap: 8px; color: #3c4043; }
.btab-t { flex: 1; font-size: 11.2px; letter-spacing: -.22px; color: #45494d; -webkit-mask-image: linear-gradient(90deg, #000 88%, transparent); mask-image: linear-gradient(90deg, #000 88%, transparent); }
.newtab { width: 28px; height: 28px; margin-left: 8px; display: grid; place-items: center; border-radius: 50%; }
.round { background: #dfe3e8; }
.aerobtns { margin: 0 3px 16px auto; display: flex; width: 103px; height: 18px; border: 1px solid #45505c; border-top: 0; border-radius: 0 0 5px 5px; overflow: hidden; box-shadow: 0 0 1px #fff; }
.ab { width: 28px; display: grid; place-items: center; background: linear-gradient(#b5bec7, #8f9aa5 45%, #5f6c79 50%, #7d8a97); border-right: 1px solid #45505c; }
.ab.close { flex: 1; border: 0; color: #fff; background: linear-gradient(#e8a592, #d2563b 45%, #b22a10 50%, #cf5a36); }
.ab-min { width: 11px; height: 4px; background: #fff; border: 1px solid #555; margin-top: 4px; }
.ab-max { width: 10px; height: 9px; border: 2px solid #fff; outline: 1px solid #555; }
.winbtns { margin: -6px 16px 0 auto; display: flex; align-items: center; gap: 39px; }
.wmin { width: 10px; height: 1px; background: #111; margin-right: -3px; } .wmax { width: 10px; height: 10px; }

/* Toolbar */
.toolbar { height: 35px; flex: none; display: flex; align-items: center; padding: 2px 8px 0 14px; background: #fff; }
.nav { color: #5f6368; margin-right: 16px; } .dim { color: #bdc1c6; }
.omni { height: 28px; border-radius: 14px; background: #f1f3f4; display: flex; align-items: center; padding: 0 9px 0 10px; margin-left: -2px; font-size: 13px; color: #5f6368; }
.omni-l { width: 1639px; } .omni-r { width: 1576px; }
.ns { width: 67px; margin-left: 8px; } .bar { width: 1px; height: 16px; background: #9aa0a6; margin: 0 9px 0 8px; }
.url { letter-spacing: .04px; }
.url b { font-weight: 400; color: #202124; }
.end { margin-left: auto; } .end + .i16 { margin-left: 16px; }
.exts { flex: 1; display: flex; justify-content: flex-end; align-items: center; gap: 16px; }
.uib { width: 16px; height: 16px; background: #1763b5; color: #fff; font: bold 12px/16px "Open Sans", sans-serif; text-align: center; }
.ava { width: 22px; height: 22px; border-radius: 50%; color: #fff; font-size: 11px; line-height: 22px; text-align: center; margin: 0 -3px; }
.teal { background: #0097a7; } .slate { background: #455a64; }
.kebab { width: 28px; height: 28px; border-radius: 50%; background: #dedfe1; display: grid; place-items: center; margin: 0 0 0 -6px; }

/* Bookmarks */
.bookmarks { height: 34px; flex: none; display: flex; align-items: center; gap: 16px; padding: 0 0 3px 14px; border-bottom: 1px solid #d5d8dc; color: #3c4043; }
.bm { display: flex; gap: 8px; align-items: center; height: 20px; width: 137px; flex: none; letter-spacing: -.05px; }
.bm:nth-child(1) { width: 51px; }
.bm-l .bm:nth-child(2) { width: 107px; } .bm-l .bm:nth-child(3) { width: 55px; } .bm-l .bm:nth-child(4) { width: 61px; }
.bm-l .bm:nth-child(5), .bm-l .bm:nth-child(6), .bm-l .bm:nth-child(7) { width: 138px; }
.bm-r .bm:nth-child(2) { width: 137px; } .bm-r .bm:nth-child(3) { width: 138px; } .bm-r .bm:nth-child(4) { width: 137px; }
.bm-r .bm:nth-child(5) { width: 130px; } .bm-r .bm:nth-child(6) { width: 101px; } .bm-r .bm:nth-child(7) { width: 137px; }
.bm-r .bm:nth-child(8) { width: 90px; } .bm-r .bm:nth-child(9) { width: 58px; } .bm-r .bm:nth-child(10) { width: 43px; }
.bm-r .bm:nth-child(11) { width: 75px; } .bm-r .bm:nth-child(12) { width: 101px; } .bm-r .bm:nth-child(13) { width: 138px; }
.bm-r .bm:nth-child(14) { width: 45px; }
.fav { width: 16px; height: 16px; flex: none; color: #fff; text-align: center; font: bold 12px/15px "Liberation Sans", sans-serif; }
.htg { background: #111; font-size: 7px; line-height: 16px; } .uil { background: #fff; border: 1.5px solid #1b7fd0; color: #1b7fd0; font-size: 11px; line-height: 13px; }
.rr { background: #18a9ef; font-size: 15px; line-height: 14px; } .fb { background: #3b5998; font-size: 15px; line-height: 18px; }

/* Application page */
.page { height: 884px; flex: none; border: 1px solid #2f6397; border-bottom: 2px solid #2f6a9f; padding: 2px 2px 0; display: flex; flex-direction: column; }
.apptabs { height: 34px; flex: none; position: relative; display: flex; align-items: flex-end; padding-left: 3px; border: 1px solid #2d6395; border-right: 0; background: linear-gradient(#8cb8db, #7fb0d8); font-weight: 700; font-size: 11.8px; }
.wave { position: absolute; inset: 0; width: 100%; height: 100%; }
.apptabs a { position: relative; z-index: 1; height: 28px; line-height: 29px; flex: none; text-align: center; color: #24639d; background: linear-gradient(#eef6fd, #fbfdff 40%, #d9eafa); border: 1px solid #cfe2f3; border-bottom: 0; margin-right: 2px; white-space: nowrap; }
.apptabs a.on { color: #e06a06; background: #fbfdfe; height: 29px; margin-bottom: -1px; border-color: #fff; }
.apptabs a.off { color: #5f98c8; background: rgba(173,205,232,.75); border-color: #a9cae6; }
.at-l a:nth-of-type(1) { width: 115px; margin-right: 3px; } .at-l a:nth-of-type(2) { width: 62px; } .at-l a:nth-of-type(3) { width: 171px; } .at-l a:nth-of-type(4) { width: 129px; } .at-l a:nth-of-type(5) { width: 149px; } .at-l a:nth-of-type(6) { width: 119px; } .at-l a:nth-of-type(7) { width: 52px; }
.at-r { font: bold 12px "Liberation Sans", Arial, sans-serif; }
.at-r a { line-height: 27px; }
.at-r a:nth-of-type(1) { width: 109px; margin-right: 4px; } .at-r a:nth-of-type(2) { width: 58px; margin-right: 3px; } .at-r a:nth-of-type(3) { width: 158px; } .at-r a:nth-of-type(4) { width: 123px; } .at-r a:nth-of-type(5) { width: 141px; } .at-r a:nth-of-type(6) { width: 115px; } .at-r a:nth-of-type(7) { width: 50px; }
.title { font-size: 17px; font-weight: 300; line-height: 26px; height: 42px; flex: none; padding-top: 9px; margin-left: 20px; color: #333; white-space: nowrap; }
.title.dark { color: #222; border-bottom: 1px solid #c8cacc; font-size: 17.8px; }
.actions { height: 35px; flex: none; margin-left: 20px; border-bottom: 1px solid #c8cacc; display: flex; align-items: center; padding-left: 13px; }
.cyc { margin: 3px 26px 0 25px; } .a1 { width: 77px; } .a2 { width: 29px; margin-left: 22px; } .act + .tri { margin-left: 3px; }
.alert { height: 99px; flex: none; margin: 24px 1px 0 24px; background: #d3d3d3; display: flex; padding: 20px 0 0 10px; font-weight: 700; color: #333; }
.warn { width: 29px; height: 29px; margin-right: 6px; }
.alert-b p { margin-top: 8px; line-height: 19px; }
.alert-b ul { margin-top: 3px; padding-left: 4px; list-style-position: outside; }
.alert-b span { color: #f00; }

/* Task form */
.form { display: flex; margin: 33px 0 0 26px; flex: none; color: #555; }
.col { display: grid; grid-template-columns: 205px 312px 22px; align-content: start; }
.col1 { width: 594px; grid-template-rows: repeat(5, 29px) 63px 63px 100px repeat(3, 29px) 44px; }
.col2 { grid-auto-rows: 29px; }
.col label { line-height: 24px; }
.f { height: 22px; border: 1px solid #c6c8ca; border-bottom-color: #bfc1c3; line-height: 21px; padding-left: 2px; white-space: nowrap; color: #111; }
.ro { background: #f2f3f5; color: #5e5e5e; } .ta { height: 57px; } .msg { letter-spacing: -.06px; }
.lens { margin: 3px 0 0 4px; } .clr { margin: 5px 0 0 6px; color: #555; }
.selwrap { position: relative; }
.sel { height: 24px; border: 1px solid #c6c8ca; display: flex; align-items: center; justify-content: space-between; padding: 1px 4px 0 6px; color: #111; }
.chev { width: 10px; height: 8px; }
.menu { position: absolute; left: 0; top: 24px; width: 313px; height: 52px; background: #fff; border: 1px solid #666; z-index: 2; }
.op { height: 17px; line-height: 18px; padding-left: 6px; color: #222; } .blank { height: 15px; } .hi { background: #1e90ff; color: #fff; }
.btns { display: flex; gap: 3px; margin-left: 24px; }
.btn { width: 120px; height: 32px; line-height: 32px; text-align: center; border: 1px solid #c6c8ca; color: #111; } .gray { background: #ebebeb; border-color: #ebebeb; }

/* Task grid */
.split { flex: 1; min-height: 0; display: flex; padding-bottom: 3px; }
.main { width: 1896px; padding-left: 5px; overflow: hidden; }
.main .title { margin-left: 15px; height: 48px; }
.scroll { width: 17px; background: #f1f1f1; display: flex; flex-direction: column; justify-content: space-between; align-items: center; padding: 17px 0 6px; }
.thumb { width: 13px; height: 530px; background: #c1c1c1; } .scroll .tri { border-top-width: 4px; }
.filter { width: 1887px; height: 38px; background: #f5f5f5; border: 1px solid #ccc; display: flex; align-items: center; padding-left: 5px; color: #222; }
.cb { width: 13px; height: 13px; border: 1px solid #767676; border-radius: 3px; background: #fff; flex: none; display: block; }
.cb.on { background: #0b76ef; border: 0; width: 14px; }
.w-filter { width: 147px; margin: 0 2px 0 5px; } .vb { width: 1px; height: 20px; background: #ccc; flex: none; }
.w-from { width: 29px; margin: 0 5px 0 7px; } .w-until { width: 27px; margin: 0 5px; } .w-task { width: 58px; margin: 0 3px; } .w-asg { width: 65px; margin: 0 3px 0 4px; }
.dt { width: 200px; height: 26px; border: 1px solid #ccc; border-radius: 3px; background: #f4f4f4; display: flex; align-items: center; color: #8a8a8a; padding-left: 4px; flex: none; }
.dt span { width: 147px; border-right: 1px solid #ccc; line-height: 24px; } .dt .i16 { margin-left: 4px; } .dt .i16 + .i16 { margin-left: 8px; }
.inp { width: 251px; height: 27px; border: 1px solid #c4c4c4; border-radius: 3px; background: #fff; flex: none; }
.gb { height: 26px; border: 1px solid #ccc; border-radius: 3px; background: #fafafa; display: flex; align-items: center; gap: 4px; padding-left: 5px; flex: none; color: #222; } .dis { color: #999; }
.b1 { width: 88px; margin: 0 5px; } .b2 { width: 71px; margin-left: 6px; } .b3 { width: 134px; margin: 0 5px; } .b4 { width: 74px; margin-right: 5px; }
.filter .cb.on { margin-left: 7px; } .w-auto { width: 62px; margin: 0 2px 0 5px; }
.more { margin-left: auto; width: 37px; align-self: stretch; background: #fff; border-left: 1px solid #ccc; display: grid; place-items: center; }
.grid { width: 1887px; margin-top: 5px; border: 1px solid #ccc; border-radius: 4px 4px 0 0; }
.row { display: grid; grid-template-columns: 29px 198px 201px 99px 131px 126px 107px 103px 83px 96px 123px 134px 125px 91px 173px 1fr; height: 46px; }
.row > span { border-right: 1px solid #ccc; padding-left: 8px; display: flex; align-items: center; color: #222; }
.row > span:last-child { border: 0; } .row > span:first-child { padding-left: 7px; }
.row:not(.head) > span:nth-child(n+2) { padding-bottom: 2px; }
.head { height: 31px; background: #f5f5f5; border-bottom: 1px solid #ccc; padding: 0; }
.head > span { padding-top: 2px; }
.head em { margin: -2px 0 0 auto; width: 35px; align-self: stretch; display: grid; place-items: center; padding-top: 5px; flex: none; }
.head em .i14 { width: 13px; }
.hl { background: #428bca; }
.asc { font: bold 12px/14px "DejaVu Sans", sans-serif; }

/* Footer */
.foot { height: 53px; flex: none; display: flex; background: #fff; color: #35357c; font: 10.9px/14px "DejaVu Sans Condensed", "Noto Sans", sans-serif; letter-spacing: -.54px; padding-top: 1px; }
.clogo { width: 432px; display: flex; padding-left: 2px; } .sw { width: 15px; height: 47px; margin-right: -2px; }
.clogo b { display: block; margin-top: 18px; font: 500 16px/14px "Lato", sans-serif; letter-spacing: 3.5px; color: #222; }
.clogo small { display: block; font: 6px/8px "Lato", sans-serif; letter-spacing: 1.95px; color: #333; margin-top: 1px; padding-left: 1px; white-space: nowrap; }
.ver { width: 851px; padding-top: 19px; } .copy { padding-top: 19px; width: 556px; }
.slogo { margin-left: 5px; width: 72px; } .sunsvg { width: 50px; height: 22px; margin: 7px 0 0 10px; }
.slogo b { font: bold 20px/20px "Open Sans", sans-serif; letter-spacing: -1.4px; color: #141414; display: block; margin-top: -4px; } .slogo em { color: #f08a12; }

/* Taskbars */
.task7 { height: 40px; flex: none; display: flex; align-items: center; background: linear-gradient(90deg, rgba(5,8,12,.9), rgba(20,26,34,.4) 60%, rgba(5,8,12,.9)), #141a22; border-top: 1px solid #68717c; padding-left: 9px; }
.orb { width: 36px; height: 36px; } .slots { display: flex; gap: 4px; margin-left: 15px; align-items: center; }
.s { width: 58px; height: 38px; display: grid; place-items: center; position: relative; }
.run { border: 1px solid #7a8087; border-radius: 3px; background: linear-gradient(135deg, #6d7278, #3a3e43 50%, #202327); }
.lit { background: linear-gradient(135deg, #c9ccd0, #8b8f94 50%, #5e6266); border-color: #bfc3c7; }
.stack { width: 50px; margin-right: 8px; box-shadow: 3px 0 0 -1px #15191e, 4px 0 0 -1px #6a7077, 7px 0 0 -1px #15191e, 8px 0 0 -1px #5c6269; }
.t24 { width: 24px; height: 24px; } .t28 { width: 28px; height: 26px; } .t30 { width: 30px; height: 30px; } .t32 { width: 32px; height: 32px; } .tcmd { width: 30px; height: 24px; }
.cmd small { position: absolute; left: 17px; top: 12px; font: 8px/8px "Liberation Mono", monospace; color: #fff; }
.xl small { position: absolute; left: 15px; top: 13px; font: bold 12px/12px "Open Sans", sans-serif; color: #fff; }
.ui { width: 32px; height: 32px; color: #fff; font: bold 19px/33px "Open Sans", sans-serif; text-align: center; display: block; } .u1 { background: #0067df; } .u2 { background: #004799; } .u3 { background: #f04c23; } .sm { width: 24px; height: 24px; font-size: 14px; line-height: 25px; }
.ibas { width: 31px; height: 30px; border-radius: 4px; background: linear-gradient(#d6f5cf, #4da83f 55%, #2c8a2c); color: #114f14; font: bold 11px/17px "Open Sans", sans-serif; letter-spacing: -.7px; text-align: center; }
.tray7 { margin-left: auto; display: flex; align-items: center; gap: 9px; } .up { border: 4px solid transparent; border-bottom: 5px solid #fff; border-top: 0; margin-right: 3px; }
.tray7 svg { margin-top: 3px; } .time { color: #fff; font-size: 11.2px; line-height: 17px; text-align: center; width: 60px; }
.tray7 .time { margin-left: 1px; } .peek { width: 14px; height: 39px; border: 1px solid #6a737d; background: #20262e; margin-left: -3px; }
.task10 { height: 40px; flex: none; background: #000; display: flex; }
.slots10 { display: flex; gap: 1px; } .slots10 span { width: 48px; height: 40px; display: grid; place-items: center; }
.slots10 .run { border: 0; border-radius: 0; background: linear-gradient(#76b9ed, #76b9ed) 50% 100% / 40px 2px no-repeat; } .cur { background: linear-gradient(#76b9ed, #76b9ed) 0 100% / 100% 2px no-repeat, #333; }
.tv { width: 20px; height: 16px; }
.tray10 { margin-left: auto; display: flex; align-items: center; gap: 8px; } .tray10 .time { margin-left: -1px; }
.notif { position: relative; width: 18px; margin: 0 13px 0 8px; } .notif .i16 { margin-top: -3px; }
.notif b { position: absolute; left: 7px; top: 4px; width: 17px; height: 17px; border-radius: 50%; background: #2b2b2b; border: 1px solid #999; color: #fff; font-size: 10px; font-weight: 400; line-height: 15px; text-align: center; }
.peek10 { width: 1px; height: 40px; background: #555; margin: 0 4px; }

/* Floating layers */
.pop { position: absolute; top: 67px; right: 1px; z-index: 5; background: #fff; border: 1px solid #bbb; border-radius: 3px; box-shadow: 0 1px 3px rgba(0,0,0,.45); padding: 18px 16px 0; }
.pop-l { width: 545px; height: 173px; } .pop-r { width: 321px; height: 130px; }
.px { position: absolute; top: 8px; right: 9px; color: #5f6368; }
.pop h2 { font-size: 14px; line-height: 20px; color: #202124; } .pop p { font-size: 11.6px; line-height: 18px; margin-top: 9px; color: #202124; letter-spacing: -.1px; }
.pop-l .pb { margin-right: -1px; }
.help { display: flex; gap: 20px; align-items: center; margin-top: 18px; font-size: 11.6px; letter-spacing: -.08px; color: #5f6368; white-space: nowrap; } .help a { color: #1a5fdc; } .cbx { flex: none; width: 13px; height: 12px; border: 1.5px solid #5f6368; margin-top: 4px; }
.pb { display: flex; justify-content: flex-end; gap: 8px; margin-top: 21px; } .pop-r .pb { margin-top: 16px; }
.pb span { height: 32px; line-height: 32px; border-radius: 4px; text-align: center; font-size: 11.6px; } .blue { width: 74px; background: #1a73e8; color: #fff; font-weight: 600; } .line { width: 140px; border: 1px solid #dadce0; color: #1a5fdc; line-height: 30px !important; }
.rdpbar { position: absolute; top: 0; left: 1235px; width: 576px; height: 27px; z-index: 6; } .rdpbg { position: absolute; width: 576px; height: 27px; }
.rdprow { position: relative; display: flex; align-items: center; height: 24px; padding-left: 30px; color: #fff; }
.pin { width: 22px; height: 19px; margin: -2px 6px 0 0; border: 1px solid #16355f; border-radius: 3px; background: #35507a; display: grid; place-items: center; }
.ip { margin: 0 auto; width: 82px; position: relative; left: 5px; } .rmin { width: 8px; height: 2px; background: #fff; margin: 5px 14px 0 0; } .rx { margin: 0 36px 0 14px; }
.mark { position: absolute; left: 1599px; top: 945px; z-index: 4; color: #b6b6b6; display: flex; flex-direction: column; } .mark b { font-weight: 400; font-size: 18.7px; line-height: 26px; } .mark span { font-size: 13.6px; line-height: 20px; }
```
